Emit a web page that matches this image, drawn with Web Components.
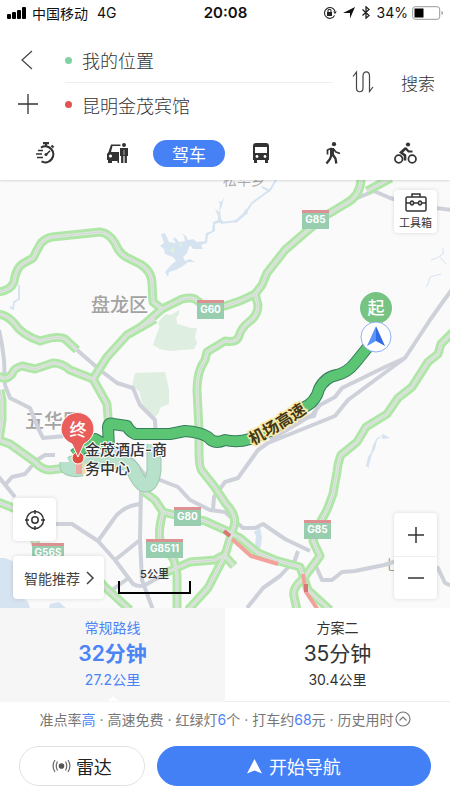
<!DOCTYPE html>
<html lang="zh-CN">
<head>
<meta charset="utf-8">
<meta name="viewport" content="width=device-width, initial-scale=1">
<title>路线规划</title>
<style>
    body {
        margin: 0;
        background: #fff;
        color: #333;
        font-family: Inter, "Noto Sans CJK SC", sans-serif;
        font-size: 14px;
    }
</style>
</head>
<body>
<nav-app></nav-app>
<script>
"use strict"

const reset = `
    * { box-sizing: border-box; }
    button, input {
        margin: 0;
        padding: 0;
        border: 0;
        background: none;
        color: inherit;
        font: inherit;
    }
    button { flex: none; white-space: nowrap; }
    svg { display: block; flex: none; }
`

class Base extends HTMLElement {
    constructor() {
        super()
        const template = document.createElement("template")
        template.innerHTML = `<style>${reset}</style>` + this.render()
        const root = this.attachShadow({ mode: "open" })
        root.append(template.content.cloneNode(true))
    }
}

class StatusBar extends Base {
    render() {
        return `
            <style>
                :host {
                    display: grid;
                    grid-template-columns: 1fr auto 1fr;
                    align-items: center;
                    height: 25px;
                    padding: 0 6px 0 7px;
                    color: #111;
                }
                div { display: flex; align-items: center; }
                .net { gap: 5px; }
                .net span + span { margin-left: 4px; }
                .right { justify-content: flex-end; gap: 6px; }
                b { font-size: 15px; font-weight: 600; }
                .power { gap: 4px; }
            </style>
            <div class="net">
                <svg width="20" height="12" fill="#000">
                    <rect y="7" width="4" height="5" rx="1"/>
                    <rect x="5" y="5" width="4" height="7" rx="1"/>
                    <rect x="10" y="3" width="4" height="9" rx="1"/>
                    <rect x="15" y="0" width="4" height="12" rx="1"/>
                </svg>
                <span>中国移动</span>
                <span>4G</span>
            </div>
            <b>20:08</b>
            <div class="right">
                <svg width="14" height="14" viewBox="0 0 14 14" fill="none" stroke="#222" stroke-width="1.1">
                    <path d="M11.6 9.6A5.4 5.4 0 1 1 12 5.2"/>
                    <path d="M10.2 5.4h3.6L12 8z" fill="#222" stroke="none"/>
                    <rect x="4" y="6" width="5" height="4" fill="#222" stroke="none"/>
                    <path d="M5 6V4.8a1.5 1.5 0 0 1 3 0V6"/>
                </svg>
                <svg width="12" height="12" viewBox="0 0 12 12"><path d="M12 0L7 11.500V6H0z" fill="#111"/></svg>
                <svg width="10" height="13" viewBox="0 0 10 13" fill="none" stroke="#222" stroke-width="1.3"><path d="M1.500 3.500l6.500 6-3 2.700V.8l3 2.700-6.500 6"/></svg>
                <div class="power">
                    <span>34%</span>
                    <svg width="32" height="14" viewBox="0 0 32 14">
                        <rect x=".7" y=".7" width="27" height="12.600" rx="2.500" fill="#fff" stroke="#999"/>
                        <rect x="2.500" y="2.500" width="9" height="9" fill="#000"/>
                        <path d="M29.500 5v4q1.500-.5 1.500-2t-1.500-2z" fill="#999"/>
                    </svg>
                </div>
            </div>
        `
    }
}

class RouteSearch extends Base {
    render() {
        return `
            <style>
                :host {
                    display: flex;
                    align-items: center;
                    padding: 13px 15px 0 15px;
                    font-weight: 300;
                }
                .side button, .field { height: 44px; }
                .side button { display: flex; align-items: center; justify-content: center; width: 26px; }
                .fields { flex: 1; min-width: 0; margin: 0 18px 0 24px; }
                .field { display: flex; align-items: center; gap: 10px; }
                .field + .field { border-top: 1px solid #eee; }
                .field::before {
                    content: "";
                    width: 7px;
                    height: 7px;
                    border-radius: 50%;
                    background: #7fd3a0;
                }
                .field + .field::before { background: #e0554f; }
                input { flex: 1; min-width: 0; font-size: 18px; outline: 0; }
                .search { margin-left: 26px; font-size: 17px; }
            </style>
            <div class="side">
                <button aria-label="返回"><svg width="20" height="20" fill="none" stroke="#444" stroke-width="1.200"><path d="M14 1L4 10l10 9"/></svg></button>
                <button aria-label="添加途经点"><svg width="20" height="20" fill="none" stroke="#333" stroke-width="1.300"><path d="M0 10h20M10 0v20"/></svg></button>
            </div>
            <div class="fields">
                <div class="field"><input aria-label="起点" value="我的位置"></div>
                <div class="field"><input aria-label="终点" value="昆明金茂宾馆"></div>
            </div>
            <button aria-label="交换起终点">
                <svg width="24" height="24" viewBox="0 0 24 24" fill="none" stroke="#444" stroke-width="1.200">
                    <path d="M2 6.500L5.500 2v16c0 5 6.500 5 6.500 0V6c0-5.500 6.500-5.500 6.500 0v15.500L22 17"/>
                </svg>
            </button>
            <button class="search">搜索</button>
        `
    }
}

class TravelModes extends Base {
    render() {
        return `
            <style>
                :host {
                    display: grid;
                    grid-template-columns: repeat(6, 1fr);
                    align-items: center;
                    height: 54px;
                    padding: 0 9px;
                    background: #fff;
                    box-shadow: 0 1px 2px #0002;
                    position: relative;
                    z-index: 1;
                }
                button { display: flex; align-items: center; justify-content: center; height: 27px; color: #333; }
                button[aria-pressed] {
                    border-radius: 14px;
                    background: #4681f6;
                    color: #fff;
                    font-size: 17px;
                }
            </style>
            <button aria-label="智行">
                <svg width="22" height="24" viewBox="0 0 22 24" fill="none" stroke="#333" stroke-width="2.200">
                    <path d="M7 6.600A8 8 0 1 1 7.500 20.400"/>
                    <path d="M4 9.500h5M2 13h6M3 16.500h6" stroke-width="1.400"/>
                    <path d="M9 2.200h6M12 2v3M17.500 4.500l2 2"/>
                    <path d="M12 13.800l4-4" stroke-width="1.600"/>
                    <circle cx="12" cy="13.500" r="1.500" fill="#333" stroke="none"/>
                </svg>
            </button>
            <button aria-label="打车">
                <svg width="23" height="24" viewBox="0 0 23 24" fill="#333">
                    <path d="M5 3.500h9.500v1.500H6.500L5 11h8v11h-1.500v-2H6v2H2v-3H1v-6l1.500-2z"/>
                    <circle cx="4.500" cy="15" r="1.600" fill="#fff"/>
                    <circle cx="18" cy="4" r="2"/>
                    <path d="M14 7h8v8h-1.100v7h-2.300v-7h-1.200v7h-2.300v-7H14z"/>
                    <path d="M18 9v5" stroke="#fff" stroke-width=".6"/>
                </svg>
            </button>
            <button aria-pressed="true">驾车</button>
            <button aria-label="公交">
                <svg width="18" height="22" viewBox="0 0 18 22" fill="#333">
                    <path d="M4 1h10q3 0 3 3v14h-1v3h-3v-3H5v3H2v-3H1V4q0-3 3-3z"/>
                    <path d="M3 5h12v6H3z" fill="#fff"/>
                    <circle cx="5" cy="14.500" r="1.400" fill="#fff"/>
                    <circle cx="13" cy="14.500" r="1.400" fill="#fff"/>
                </svg>
            </button>
            <button aria-label="步行">
                <svg width="16" height="24" viewBox="0 0 16 24" fill="none" stroke="#333">
                    <circle cx="9" cy="3.200" r="2.100" fill="#333" stroke="none"/>
                    <path d="M7 7v8" stroke-width="4"/>
                    <path d="M6.500 7.200L2.500 9v4.500M8.500 8l2.500 3 4 1.500" stroke-width="1.700"/>
                    <path d="M6.500 14L5 18l-3.500 4.500M8 14l2.500 3.500.8 5" stroke-width="2.300"/>
                </svg>
            </button>
            <button aria-label="骑行">
                <svg width="23" height="24" viewBox="0 0 23 24" fill="none" stroke="#333" stroke-width="1.700">
                    <circle cx="4.700" cy="18" r="3.800"/>
                    <circle cx="18.200" cy="18" r="3.800"/>
                    <circle cx="14" cy="3.500" r="2.100" fill="#333" stroke="none"/>
                    <path d="M12 7L7 11.500l4 3v5" stroke-width="2.600"/>
                    <path d="M11.500 7l3 3.500h4" stroke-width="2.200"/>
                </svg>
            </button>
        `
    }
}

// Map geometry, all in the coordinates of the svg viewBox below.
const streets = [
    "M355 199L374 191L390 198L420 206L452 210",
    "M77 350L100 370L117 383L133 388L140 405L155 420L156 440",
    "M-1 330L2 345L4 360L5 385L10 398L30 408L38 428L43 438L65 436",
    "M-2 476L15 497M5 485L12 477L25 474L37 460L45 455L55 455",
    "M50 524H72L98 541L115 560L133 584Q140 588 147 584L165 574",
    "M98 541L113 520Q122 506 140 504M115 560L140 540M112 590L130 577",
    "M141 488L140 540L142 580L153 610",
    "M125 450L135 463L145 475L160 480L178 487L190 500L210 510L225 512L243 528H255L263 524L285 539L310 551",
    "M213 510L214 497L225 482L238 478L258 450L268 443L335 416L348 400L375 380L405 358L430 320L442 303L453 288",
    "M405 358L385 367L342 388L335 397L320 405L312 415L270 440M318 404L314 416L290 421",
    "M298 551L295 560L280 576L263 588L247 608",
    "M315 564L322 580H332L342 572L355 571L384 565L400 560L438 568L445 583L452 586",
    "M225 304L240 302M92 458L115 450L122 460"
]
const highways = [
    "M-2 292Q10 291 14 282Q16 267 24 263L33 258Q37 250 41 243Q46 238 52 237L100 232Q109 233 115 243Q119 253 126 257L140 264Q152 271 152 284L153 302L162 309",
    "M140 328L162 309L182 299Q190 297 195 299L203 305L225 306L240 301L255 294",
    "M255 294L262 285L267 273L285 250L307 231L325 216L345 204Q361 196 361 178",
    "M367 191L391 178",
    "M255 294L258 305Q258 315 250 321Q241 328 239 336Q237 343 225 341L207 352L205 360Q197 371 197 390L199 430L199 450Q199 468 202 471L214 486L226 504Q237 515 234 526L225 555L208 588L188 610",
    "M155 319L127 335L107 357L93 379",
    "M-2 375Q5 382 12 374Q14 368 22 366L35 369L53 363Q62 363 70 370L93 379L107 404L109 430L107 455",
    "M-2 314Q7 315 14 323Q22 335 40 341Q58 335 65 339L77 350",
    "M0 390L2 400V420L-1 440L10 444L35 462Q42 470 50 470L66 468",
    "M-2 502L16 509L32 530L36 545M80 560L105 587L130 610",
    "M143 491L155 500L163 512Q158 530 160 540L174 560L177 574V610",
    "M163 512L175 515L205 521L225 530L240 538L258 553L275 560L300 567L308 590L330 610",
    "M163 574L190 562L215 560L224 555L234 566",
    "M453 332L441 344L438 354L428 362L412 387L398 398L387 414L366 427L357 442L341 455Q338 462 337 472L333 494L327 510L317 528L313 541L320 556L303 579Q292 588 294 596L297 610"
]
const shields = [
    [302, 210, 27, "G85"],
    [197, 300, 27, "G60"],
    [174, 507, 27, "G80"],
    [146, 539, 37, "G8511"],
    [304, 520, 27, "G85"],
    [32, 543, 32, "G56S"]
]

class MapCanvas extends Base {
    render() {
        const route = "M376 337L355 363Q348 372 337 375Q325 377 319 389Q316 402 303 408L270 431L250 439Q237 443 225 440Q214 445 208 437Q200 432 185 431L170 434H135Q129 431 127 426L113 424Q109 422 108 427L109 447L95 439L74 455"
        const jam = "M232 539L251 556L278 564M303 574L306 592L318 610"
        const ring = "M70 464Q88 457 108 462Q127 460 133 469Q139 484 145 485Q152 486 154 470V444M67 462V467Q72 471 82 469"
        return `
            <style>
                :host { display: block; overflow: hidden; }
                svg { width: 100%; height: 100%; }
                path { fill: none; stroke-linejoin: round; }
                .street { stroke: #ced1da; stroke-width: 4; }
                .green { stroke: #b0e7a8; stroke-width: 9; }
                .lane { stroke: #e0e7de; stroke-width: 3; }
                .mid { stroke: #d3d7da; stroke-width: 1; }
                .water { fill: #d6e3f1; }
                .stream { stroke: #d6e3f1; stroke-width: 2; }
                .park { fill: #deeee1; }
                .district { font-size: 19px; font-weight: 500; fill: #a3a3a3; }
                .shield { font-size: 10px; font-weight: 700; fill: #fff; text-anchor: middle; }
                .road { font-size: 16px; font-weight: 700; fill: #453813; stroke: #f8e9a8; stroke-width: 3; paint-order: stroke; }
                .place { font-size: 15px; font-weight: 500; fill: #333; stroke: #fff; stroke-width: 2; paint-order: stroke; }
                .pin { font-size: 17px; font-weight: 500; fill: #fff; text-anchor: middle; }
            </style>
            <svg viewBox="0 180 450 428" preserveAspectRatio="xMidYMid slice">
                <rect x="-500" y="-500" width="1500" height="1500" fill="#fafafa"/>
                <path class="water" d="M161 234L165 233L169 242L176 243L173 239L175 237L179 242L185 241L184 236L181 233L186 236L188 240L193 239L197 242L205 241L206 233L212 231L213 222L218 220L218 216L215 209L219 212L220 204L218 201L221 202L224 197L222 206L220 210L221 219L224 223L218 223L215 224L215 231L208 235L207 243L201 245L203 249L193 249L190 245L187 253L183 257L185 261L190 259L195 262L188 262L183 266L176 270L169 272L168 277L165 272L171 265L176 261L173 257L165 254L164 249L160 246L164 243Z"/>
                <path class="park" d="M169 250l5-3 1 4-3 2zM179 244l3-1 0 4h-3z"/>
                <path class="stream" d="M221 223L236 221L246 212L252 203L270 190L276 180M262 187l8 4"/>
                <path class="water" d="M234 222L243 214L246 208L248 213L236 223z"/>
                <path class="stream" d="M19 285l0 14-5 3-1 7-3-2" stroke-width="1"/>
                <path class="stream" d="M443 248v6l-6 4-6 2M440 257l6 7M441 274l-11 3-2 7-2 3" style="stroke-width:1"/>
                <path class="water" d="M385 434l-8 6-2 9-3 5-3 11 0 3-3-2 2-9 3-4 2-8 4-7zM383 434l7 4-8 1zM260 527l2 11-2 13-5-5 1-10-2-4zM0 558h5l12 5 8 10v20l-3 8-4 7H0zM18 600l5-2 5 4 2 6H15zM50 604l9-2 7 6H49z"/>
                <path class="park" d="M159 328l12-6 20 6 6 0-2 10 2 5-3 6-24 2-10-2-7-4 3-9zM135 373l30-1 4 17v15l-8 3-3 7-6 5-9-9-2-12-2-7-7-5zM158 322l8-8 5 1 8-5 0 4-3 4 2 9-18 2z"/>
                <text class="district" x="91" y="312">盘龙区</text>
                <text class="district" x="25" y="428">五华区</text>
                <text x="223" y="185" font-size="14" fill="#aaa">松华乡</text>
                <text x="384" y="570" font-size="14" fill="#999">七</text>
                ${streets.map(d => `<path class="street" d="${d}"/>`).join("")}
                ${highways.map(d => `<path class="green" d="${d}"/>`).join("")}
                ${highways.map(d => `<path class="lane" d="${d}"/><path class="mid" d="${d}"/>`).join("")}
                <path d="${ring}" stroke="#9cc9b0" stroke-width="15"/>
                <path d="${ring}" stroke="#b8e1cb" stroke-width="13"/>
                <path d="M79 463V474" stroke="#efa9a5" stroke-width="6"/>
                <path d="M84 463V474" stroke="#f0d9a5" stroke-width="3"/>
                <path d="${jam}" stroke="#f3a19b" stroke-width="4"/>
                <path d="M224 531l6 5M306 584v8" stroke="#d97573" stroke-width="4"/>
                <path d="${route}" stroke="#347d5c" stroke-width="12"/>
                <path d="${route}" stroke="#5cc573" stroke-width="10"/>
                ${shields.map(([x, y, w, name]) => `
                    <rect x="${x}" y="${y}" width="${w}" height="19" fill="#98cdb0"/>
                    <rect x="${x}" y="${y}" width="${w}" height="3" fill="#dc9292"/>
                    <text class="shield" x="${x + w / 2}" y="${y + 13}">${name}</text>
                `).join("")}
                <path id="label" d="M253 445Q284 429 317 405"/>
                <text class="road"><textPath href="#label">机场高速</textPath></text>
                <circle cx="376" cy="308" r="17" fill="#fff"/>
                <circle cx="376" cy="308" r="16" fill="#76c382"/>
                <text class="pin" x="376" y="314">起</text>
                <circle cx="376" cy="337" r="15" fill="#fff" stroke="#8fb2f2"/>
                <path d="M376 326l-9 20 9-5z" style="fill:#5b92fb"/>
                <path d="M376 326l9 20-9-5z" style="fill:#326ce4"/>
                <circle cx="78" cy="458" r="6" fill="#e04f3d" stroke="#fff"/>
                <path d="M78 457L72 444C66 441 61 436 61 429A16 16 0 0 1 94 429C94 436 89 441 84 444z" style="fill:#e95e5a" stroke="#fff"/>
                <text class="pin" x="78" y="436">终</text>
                <text class="place" x="85" y="455">金茂酒店-商</text>
                <text class="place" x="85" y="474">务中心</text>
            </svg>
        `
    }
}

class MapView extends Base {
    render() {
        return `
            <style>
                :host { display: block; position: relative; min-height: 380px; }
                map-canvas, .controls { position: absolute; inset: 0; }
                .controls {
                    display: flex;
                    justify-content: space-between;
                    padding: 10px 13px 9px;
                }
                .left, .right { display: flex; flex-direction: column; }
                .left { justify-content: flex-end; gap: 15px; }
                .right { justify-content: space-between; }
                button { display: flex; align-items: center; justify-content: center; min-width: 43px; height: 43px; }
                .card { border-radius: 4px; background: #fff; box-shadow: 0 0 4px #0002; }
                .tools { flex-direction: column; gap: 2px; font-size: 11px; }
                .locate { width: 43px; }
                .row { display: flex; align-items: flex-end; gap: 14px; }
                .smart { gap: 6px; padding: 0 9px 0 11px; color: #444; }
                .zoom button + button { box-shadow: inset 0 1px #eee; }
                .scale {
                    width: 73px;
                    margin-bottom: 5px;
                    font-size: 11px;
                    line-height: 16px;
                    font-weight: 500;
                    text-align: center;
                }
                .scale::after {
                    content: "";
                    display: block;
                    height: 11px;
                    margin-top: -1px;
                    border: solid #000;
                    border-width: 0 2px 2px;
                }
            </style>
            <map-canvas></map-canvas>
            <div class="controls">
                <div class="left">
                    <button class="card locate" aria-label="定位">
                        <svg width="22" height="22" viewBox="0 0 22 22" fill="none" stroke="#333" stroke-width="1.500">
                            <circle cx="11" cy="11" r="8.500"/><circle cx="11" cy="11" r="3.200"/>
                            <path d="M11 1v4M11 17v4M1 11h4M17 11h4"/>
                        </svg>
                    </button>
                    <div class="row">
                        <button class="card smart">智能推荐
                            <svg width="9" height="14" fill="none" stroke="#444" stroke-width="1.500"><path d="M1 1l6 6-6 6"/></svg>
                        </button>
                        <div class="scale">5公里</div>
                    </div>
                </div>
                <div class="right">
                    <button class="card tools">
                        <svg width="22" height="19" viewBox="0 0 22 19" fill="none" stroke="#333" stroke-width="1.500">
                            <rect x="1" y="4" width="20" height="14" rx="1.500"/>
                            <path d="M7 4V1h8v3M1 10h4M9 10h4M17 10h4"/>
                            <ellipse cx="7" cy="10" rx="1.500" ry="2"/><ellipse cx="15" cy="10" rx="1.500" ry="2"/>
                        </svg>
                        工具箱
                    </button>
                    <div class="card zoom">
                        <button aria-label="放大"><svg width="16" height="16" stroke="#333" stroke-width="1.500"><path d="M0 8h16M8 0v16"/></svg></button>
                        <button aria-label="缩小"><svg width="16" height="16" stroke="#333" stroke-width="1.500"><path d="M0 8h16"/></svg></button>
                    </div>
                </div>
            </div>
        `
    }
}

class RouteOption extends Base {
    render() {
        return `
            <style>
                :host { display: block; border-bottom: 1px solid #eee; }
                :host([selected]) {
                    background: #f6f6f7;
                    border-color: #f6f6f7;
                    color: #4a84f5;
                }
                button {
                    display: flex;
                    flex-direction: column;
                    align-items: center;
                    width: 100%;
                    padding-top: 10px;
                    line-height: 20px;
                }
                strong { font-size: 21px; line-height: 32px; font-weight: 400; }
                :host([selected]) strong { font-weight: 600; }
                i {
                    width: 0;
                    margin-top: 6px;
                    border: solid transparent;
                    border-width: 0 5px 5px;
                }
                :host([selected]) i { border-bottom-color: #fff; }
            </style>
            <button>
                <slot name="name"></slot>
                <strong><slot name="time"></slot></strong>
                <slot name="distance"></slot>
                <i></i>
            </button>
        `
    }
}

class RouteFacts extends Base {
    render() {
        return `
            <style>
                :host {
                    display: flex;
                    align-items: center;
                    justify-content: center;
                    gap: 4px;
                    height: 34px;
                    white-space: nowrap;
                    color: #777;
                }
                em { color: #4a84f5; font-style: normal; }
                button { display: flex; align-items: center; gap: 1px; }
            </style>
            <span>准点率<em>高</em></span><span>·</span>
            <span>高速免费</span><span>·</span>
            <span>红绿灯<em>6</em>个</span><span>·</span>
            <span>打车约<em>68</em>元</span><span>·</span>
            <button>历史用时
                <svg width="16" height="16" fill="none" stroke="#777" stroke-width="1.200"><circle cx="8" cy="8" r="7"/><path d="M4.500 9.500L8 6l3.500 3.500"/></svg>
            </button>
        `
    }
}

class ActionBar extends Base {
    render() {
        return `
            <style>
                :host { display: flex; gap: 12px; padding: 10px 19px 14px; }
                button {
                    display: flex;
                    align-items: center;
                    justify-content: center;
                    gap: 5px;
                    flex: 5;
                    height: 40px;
                    border: 1px solid #e2e2e2;
                    border-radius: 20px;
                    font-size: 18px;
                    color: #222;
                }
                .start { flex: 11; gap: 7px; border-color: #4480f5; background: #4480f5; color: #fff; }
            </style>
            <button>
                <svg width="19" height="14" viewBox="0 0 19 14" fill="none" stroke="#666" stroke-width="1.200">
                    <circle cx="9.500" cy="7" r="2.800" fill="#555" stroke="none"/>
                    <path d="M5.500 2.500Q3 7 5.500 11.500M13.500 2.500Q16 7 13.500 11.500M3 1Q-.8 7 3 13M16 1Q19.800 7 16 13"/>
                </svg>
                雷达
            </button>
            <button class="start">
                <svg width="15" height="15" viewBox="0 0 15 15" fill="#fff"><path d="M7.500 0L15 14.500l-7.500-3-7.500 3z"/></svg>
                开始导航
            </button>
        `
    }
}

class NavApp extends Base {
    render() {
        return `
            <style>
                :host { display: flex; flex-direction: column; min-height: 100vh; }
                map-view { flex: 1; }
                .options { display: grid; grid-template-columns: 1fr 1fr; }
            </style>
            <status-bar></status-bar>
            <route-search></route-search>
            <travel-modes></travel-modes>
            <map-view></map-view>
            <div class="options">
                <route-option selected>
                    <span slot="name">常规路线</span>
                    <span slot="time">32分钟</span>
                    <span slot="distance">27.2公里</span>
                </route-option>
                <route-option>
                    <span slot="name">方案二</span>
                    <span slot="time">35分钟</span>
                    <span slot="distance">30.4公里</span>
                </route-option>
            </div>
            <route-facts></route-facts>
            <action-bar></action-bar>
        `
    }
}

customElements.define("status-bar", StatusBar)
customElements.define("route-search", RouteSearch)
customElements.define("travel-modes", TravelModes)
customElements.define("map-canvas", MapCanvas)
customElements.define("map-view", MapView)
customElements.define("route-option", RouteOption)
customElements.define("route-facts", RouteFacts)
customElements.define("action-bar", ActionBar)
customElements.define("nav-app", NavApp)
</script>
</body>
</html>
